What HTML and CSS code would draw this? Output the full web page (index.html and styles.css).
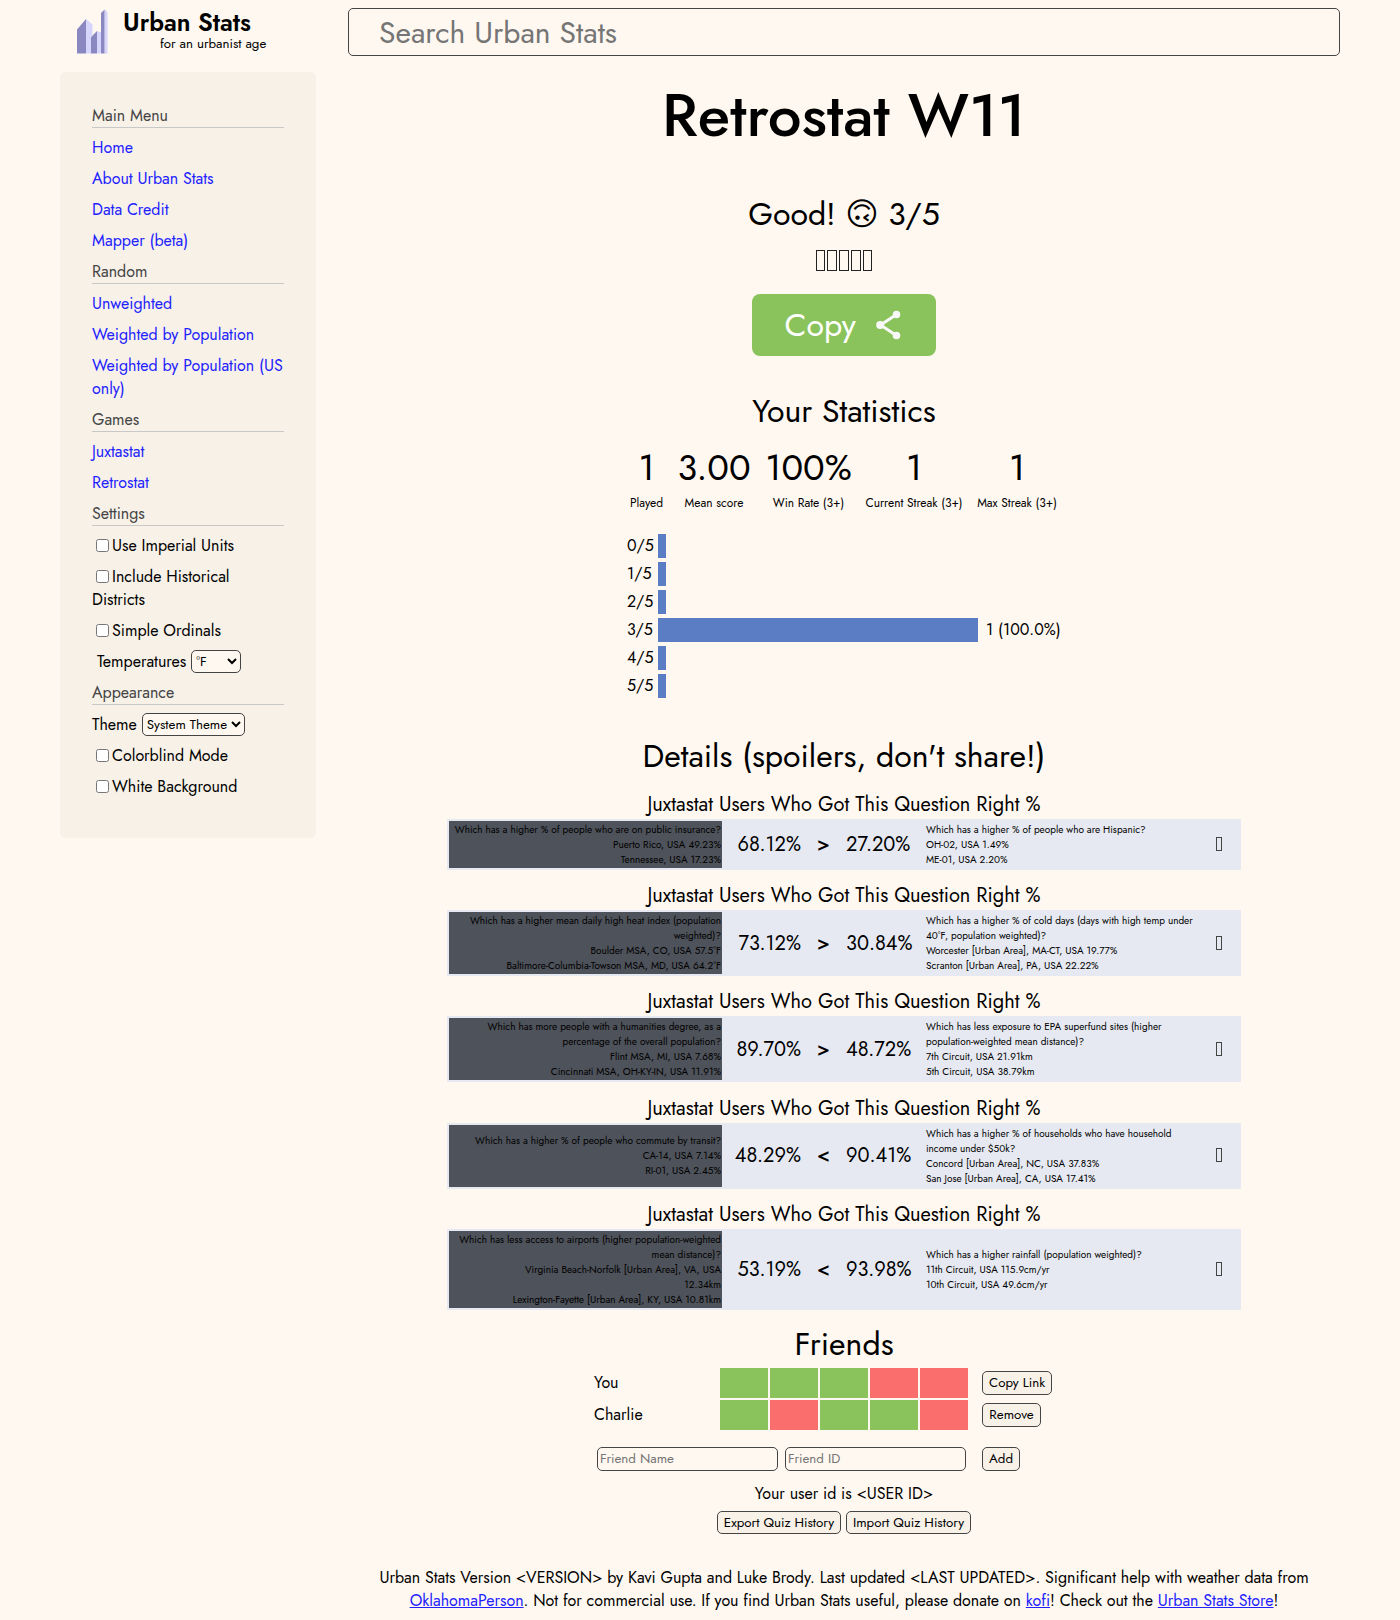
FILE: index.html
```html
<!DOCTYPE html>
<html lang="en">
<head>
<meta charset="utf-8">
<title>Retrostat W11</title>
<link rel="stylesheet" href="styles.css">
</head>
<body>
<header class="top">
  <a class="logo">
    <svg class="logo-mark" width="31" height="46" viewBox="0 0 31 46">
      <path fill="#8a88c1" d="M0 20.500 9 10V44.500H0zM14 28 20 22V44.500H14zM24 4 27.700 .5V44.500H24z"/>
      <path fill="#d6d5fb" d="M9 10 15.500 15.500V26.500L14 28V44.500H9zM20 22 24 23.500V44.500H20zM27.700 .5 30.500 3V44.500H27.700z"/>
    </svg>
    <span class="brand"><b class="brand-name">Urban Stats</b><span class="brand-tag">for an urbanist age</span></span>
  </a>
  <input class="search" placeholder="Search Urban Stats">
</header>
<div class="page">
  <nav class="sidebar">
    <h2 class="side-title">Main Menu</h2>
    <a>Home</a><a>About Urban Stats</a><a>Data Credit</a><a>Mapper (beta)</a>
    <h2 class="side-title">Random</h2>
    <a>Unweighted</a><a>Weighted by Population</a><a>Weighted by Population (US only)</a>
    <h2 class="side-title">Games</h2>
    <a>Juxtastat</a><a>Retrostat</a>
    <h2 class="side-title">Settings</h2>
    <label><input type="checkbox">Use Imperial Units</label>
    <label><input type="checkbox">Include Historical Districts</label>
    <label><input type="checkbox">Simple Ordinals</label>
    <label class="picker temps"><span>Temperatures</span><select class="unit"><option>°F</option></select></label>
    <h2 class="side-title">Appearance</h2>
    <label class="picker"><span>Theme</span><select class="theme"><option>System Theme</option></select></label>
    <label><input type="checkbox">Colorblind Mode</label>
    <label><input type="checkbox">White Background</label>
  </nav>
  <main class="content">
    <h1>Retrostat W11</h1>
    <p class="result"><span>Good!</span> <span class="face">🙃</span> <span>3/5</span></p>
    <div class="squares"><i></i><i></i><i></i><i></i><i></i></div>
    <button class="copy"><span>Copy</span>
      <svg width="25" height="30" viewBox="0 0 25 30"><path d="M20.500 4.500 4.500 15 20.500 25.500" fill="none" stroke="#f8f8f8" stroke-width="3"/><g fill="#f8f8f8"><circle cx="20.500" cy="4.500" r="3.800"/><circle cx="4.200" cy="15" r="4"/><circle cx="20.500" cy="25.500" r="3.800"/></g></svg>
    </button>
    <h2 class="head stats-head">Your Statistics</h2>
    <div class="stats">
      <div><b>1</b><span>Played</span></div>
      <div><b>3.00</b><span>Mean score</span></div>
      <div><b>100%</b><span>Win Rate (3+)</span></div>
      <div><b>1</b><span>Current Streak (3+)</span></div>
      <div><b>1</b><span>Max Streak (3+)</span></div>
    </div>
    <div class="bars">
      <div><span>0/5</span><i style="width:8px"></i></div>
      <div><span>1/5</span><i style="width:8px"></i></div>
      <div><span>2/5</span><i style="width:8px"></i></div>
      <div><span>3/5</span><i style="width:320px"></i><em>1 (100.0%)</em></div>
      <div><span>4/5</span><i style="width:8px"></i></div>
      <div><span>5/5</span><i style="width:8px"></i></div>
    </div>
    <h2 class="head details-head">Details (spoilers, don't share!)</h2>

    <h3>Juxtastat Users Who Got This Question Right %</h3>
    <div class="question">
      <div class="left"><p>Which has a higher % of people who are on public insurance?<br>Puerto Rico, USA 49.23%<br>Tennessee, USA 17.23%</p></div>
      <span class="pct first">68.12%</span><span class="cmp">&gt;</span><span class="pct">27.20%</span>
      <div class="right">Which has a higher % of people who are Hispanic?<br>OH-02, USA 1.49%<br>ME-01, USA 2.20%</div><i class="mark"></i>
    </div>
    <h3>Juxtastat Users Who Got This Question Right %</h3>
    <div class="question">
      <div class="left"><p>Which has a higher mean daily high heat index (population<br>weighted)?<br>Boulder MSA, CO, USA 57.5°F<br>Baltimore-Columbia-Towson MSA, MD, USA 64.2°F</p></div>
      <span class="pct first">73.12%</span><span class="cmp">&gt;</span><span class="pct">30.84%</span>
      <div class="right">Which has a higher % of cold days (days with high temp under<br>40°F, population weighted)?<br>Worcester [Urban Area], MA-CT, USA 19.77%<br>Scranton [Urban Area], PA, USA 22.22%</div><i class="mark"></i>
    </div>
    <h3>Juxtastat Users Who Got This Question Right %</h3>
    <div class="question">
      <div class="left"><p>Which has more people with a humanities degree, as a<br>percentage of the overall population?<br>Flint MSA, MI, USA 7.68%<br>Cincinnati MSA, OH-KY-IN, USA 11.91%</p></div>
      <span class="pct first">89.70%</span><span class="cmp">&gt;</span><span class="pct">48.72%</span>
      <div class="right">Which has less exposure to EPA superfund sites (higher<br>population-weighted mean distance)?<br>7th Circuit, USA 21.91km<br>5th Circuit, USA 38.79km</div><i class="mark"></i>
    </div>
    <h3>Juxtastat Users Who Got This Question Right %</h3>
    <div class="question">
      <div class="left"><p>Which has a higher % of people who commute by transit?<br>CA-14, USA 7.14%<br>RI-01, USA 2.45%</p></div>
      <span class="pct first">48.29%</span><span class="cmp">&lt;</span><span class="pct">90.41%</span>
      <div class="right">Which has a higher % of households who have household<br>income under $50k?<br>Concord [Urban Area], NC, USA 37.83%<br>San Jose [Urban Area], CA, USA 17.41%</div><i class="mark"></i>
    </div>
    <h3>Juxtastat Users Who Got This Question Right %</h3>
    <div class="question">
      <div class="left"><p>Which has less access to airports (higher population-weighted<br>mean distance)?<br>Virginia Beach-Norfolk [Urban Area], VA, USA<br>12.34km<br>Lexington-Fayette [Urban Area], KY, USA 10.81km</p></div>
      <span class="pct first">53.19%</span><span class="cmp">&lt;</span><span class="pct">93.98%</span>
      <div class="right">Which has a higher rainfall (population weighted)?<br>11th Circuit, USA 115.9cm/yr<br>10th Circuit, USA 49.6cm/yr</div><i class="mark"></i>
    </div>

    <h2 class="head friends-head">Friends</h2>
    <div class="friends">
      <div class="friend"><span>You</span><div class="score"><i></i><i></i><i></i><i class="miss"></i><i class="miss"></i></div><button class="b-link">Copy Link</button></div>
      <div class="friend"><span>Charlie</span><div class="score"><i></i><i class="miss"></i><i></i><i></i><i class="miss"></i></div><button class="b-remove">Remove</button></div>
      <div class="add"><input placeholder="Friend Name"><input placeholder="Friend ID"><button class="b-add">Add</button></div>
    </div>
    <p class="userid">Your user id is &lt;USER ID&gt;</p>
    <div class="history"><button class="b-export">Export Quiz History</button><button class="b-import">Import Quiz History</button></div>
    <footer>Urban Stats Version &lt;VERSION&gt; by Kavi Gupta and Luke Brody. Last updated &lt;LAST UPDATED&gt;. Significant help with weather data from<br><a>OklahomaPerson</a>. Not for commercial use. If you find Urban Stats useful, please donate on <a>kofi</a>! Check out the <a>Urban Stats Store</a>!</footer>
  </main>
</div>
</body>
</html>
```
FILE: styles.css
```css
* { box-sizing: border-box; }
body {
  margin: 0;
  padding: 8px 60px 0;
  background: #fff8f0;
  color: #000;
  font: 16px/23px Jost, Lato, "Liberation Sans", sans-serif;
}
h1, h2, h3, p { margin: 0; font-weight: 400; }
i, em { font-style: normal; }
a { color: #2222ff; }
input, button, select { font-family: inherit; }

.top { display: flex; height: 48px; }
.logo { display: flex; width: 288px; padding: 1px 0 0 17px; color: #000; }
.logo-mark { flex: none; }
.brand { display: flex; flex-direction: column; margin-left: 15px; }
.brand-name { font-size: 24.6px; line-height: 27px; font-weight: 600; }
.brand-tag { font-size: 13.3px; line-height: 15px; margin-left: 37px; }
.search {
  width: 992px; height: 48px; padding: 0 30px;
  border: 1px solid #444; border-radius: 5px;
  background: #fff8f0; font-size: 30px;
}
.search::placeholder, .add input::placeholder { color: #757575; }

.page { display: flex; gap: 32px; margin-top: 16px; align-items: flex-start; }
.sidebar {
  width: 256px; height: 766px; padding: 32px;
  display: flex; flex-direction: column; gap: 8px;
  border-radius: 5px; background: #f7f1e8;
}
.sidebar > * { display: block; }
.side-title { font-size: inherit; line-height: 23px; color: #444; border-bottom: 1px solid #c8c8c8; }
.sidebar input { width: 13px; height: 13px; margin: 3px 3px 3px 4px; vertical-align: -1px; }
.sidebar .picker { display: flex; gap: 5px; }
.temps { padding-left: 5px; }
select {
  height: 23px; padding: 0; border: 1px solid #444; border-radius: 5px;
  background: #fff8f0; color: #000; font-size: 13.333px;
}
.unit { width: 50px; }
.theme { width: 103px; }

.content { width: 992px; display: flex; flex-direction: column; align-items: center; }
h1 { margin-top: 3px; font-size: 60px; line-height: 82px; font-weight: 500; }
.result { margin-top: 34px; font-size: 32px; line-height: 46px; }
.face { font-family: "DejaVu Sans", sans-serif; }
.squares { display: flex; gap: 2px; height: 47px; align-items: center; }
.squares i { width: 9.8px; height: 21px; border: 1px solid #222; }
.copy {
  display: flex; align-items: center; justify-content: space-between;
  width: 184px; height: 62px; margin-top: 10px; padding: 0 35px 0 32.5px;
  border: 0; border-radius: 8px; background: #8ac35b; color: #fff; font-size: 32px;
}
.head { font-size: 32px; line-height: 46px; }
.stats-head { margin-top: 32px; }
.stats { display: grid; grid-template-columns: 46px 89px 100px 111px 95px; margin-top: 7px; text-align: center; }
.stats b { display: block; font-size: 36px; line-height: 52px; font-weight: 400; }
.stats span { display: block; font-size: 12px; line-height: 17px; margin-top: 2px; }
.bars { display: grid; gap: 4px; width: 434px; margin-top: 22px; }
.bars div { display: flex; height: 24px; line-height: 23px; white-space: nowrap; }
.bars span { width: 31px; }
.bars i { background: #5b7dc3; }
.bars em { margin-left: 8px; }
.details-head { margin-top: 35px; }

h3 { margin-top: 11.33px; font-size: 20px; line-height: 29px; }
.details-head + h3 { margin-top: 10.7px; }
.question {
  display: grid; grid-template-columns: 273px 79px 45px 79px 275px 39px; align-items: center;
  width: 794px; padding: 2px; background: #e6e9f1;
  font-size: 10px; line-height: 15px; white-space: nowrap;
}
.left {
  display: flex; flex-direction: column; align-self: stretch; justify-content: center;
  padding: 1px; background: #4e525a; text-align: right;
}
.right { padding: 1px 0 1px 1px; }
.pct { font-size: 20px; line-height: 29px; }
.pct.first { text-align: right; }
.cmp { font-size: 20px; font-weight: 500; text-align: center; }
.mark { justify-self: center; width: 6px; height: 14px; margin: 0 1px 1px 0; border: 1px solid #444; }

.friends-head { margin-top: 11px; }
.friends { width: 500px; margin-top: 1px; }
.friend { display: grid; grid-template-columns: 126px 262px 1fr; align-items: center; justify-items: start; height: 30px; margin-bottom: 2px; }
.friend > span { padding-bottom: 1px; }
.score { display: grid; grid-template-columns: repeat(5, 48px); gap: 2px; height: 30px; }
.score i { background: #8ac35b; }
.score .miss { background: #fa6e6d; }
.friends button, .history button {
  height: 24px; padding: 0; border: 1px solid #444; border-radius: 5px;
  background: #f7f1e8; color: #000; font-size: 13.333px;
}
.friends button { padding-bottom: 1px; }
.friends .b-link { width: 70px; }
.friends .b-remove { width: 59px; }
.add { display: flex; margin-top: 17px; padding-left: 3px; }
.add input {
  width: 181px; height: 24px; margin-right: 7px; padding: 0 2px 1px;
  border: 1px solid #444; border-radius: 5px; background: #fff8f0; font-size: 13.333px;
}
.add .b-add { width: 38px; margin-left: 9px; }
.userid { margin-top: 11px; }
.history { display: flex; gap: 5px; margin-top: 6px; }
.history .b-export, .history .b-import { height: 23px; }
.b-export { width: 124px; }
.b-import { width: 125px; }
footer { margin-top: 32px; text-align: center; white-space: nowrap; }
footer a { text-decoration: underline; }
```
